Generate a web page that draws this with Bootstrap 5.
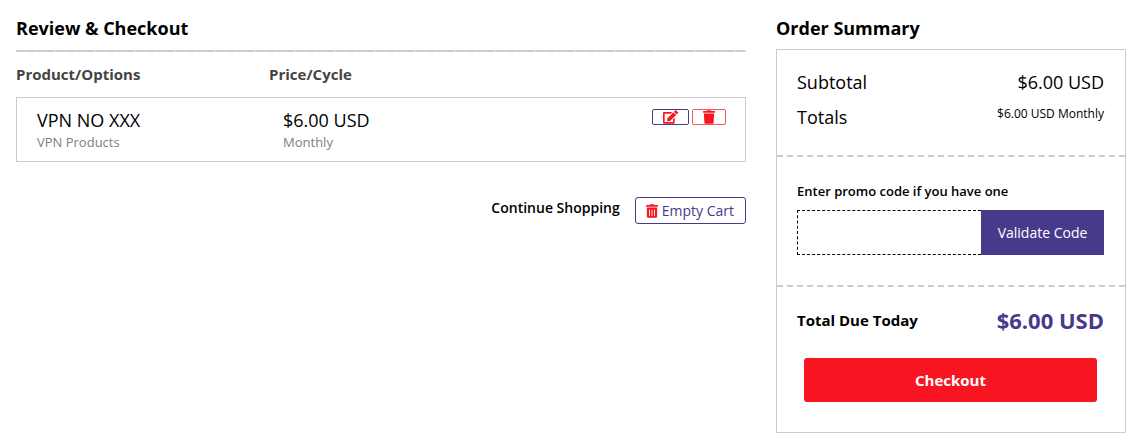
<!DOCTYPE html>
<html lang="en">
<head>
<meta charset="utf-8">
<meta name="viewport" content="width=device-width, initial-scale=1">
<title>Review &amp; Checkout</title>
<link href="https://cdn.jsdelivr.net/npm/bootstrap@5.3.0/dist/css/bootstrap.min.css" rel="stylesheet">
<style>
  body { font-family: "Open Sans", sans-serif; color: #000; font-size: 14px; line-height: 20px; }
  .page { padding: 16px 8px 4px 16px; gap: 30px; }
  .summary { width: 350px; }
  .title { font-size: 18px; line-height: 24px; font-weight: 700; margin: 0; }
  .rule { height: 2px; margin: 10px 0 12px; background: repeating-linear-gradient(90deg, #ccc 0 9px, #e4e4e4 9px 10px); }
  .items { border-collapse: separate; border-spacing: 0; table-layout: fixed; }
  .items th { font-size: 15px; line-height: 20px; font-weight: 700; color: #444; padding: 0 0 13px; }
  .items td { border: 0 solid #ccc; border-width: 1px 0; padding: 10px 14px 9px; vertical-align: top; }
  .items td:first-child { border-left-width: 1px; padding-left: 20px; }
  .items td:last-child { border-right-width: 1px; padding: 11px 19px 0 0; }
  .col-product { width: 34.66%; }
  .col-price { width: 35%; }
  .big { font-size: 18px; line-height: 24px; font-weight: 400; }
  .sub { font-size: 13px; color: #808080; }
  .row-tools { gap: 3px; }
  .icon-btn { height: 16px; padding: 0 10px; background: #fff; border: 1px solid #483a8a; border-radius: 2px; }
  .icon-btn.remove { border-color: #f4565c; }
  svg { fill: #f81421; display: block; flex: none; }
  .actions { margin-top: 35px; gap: 15px; }
  .actions a { color: #000; font-weight: 600; line-height: 22px; }
  .empty-btn { height: 27px; padding: 0 11px 0 10px; gap: 4px; background: #fff; border: 1px solid #483a8a; border-radius: 3px; color: #483a8a; font-weight: 400; }
  .panel { border: 1px solid #ccc; margin-top: 9px; }
  .section { padding: 20px 21px 20px 20px; border-bottom: 2px dashed #ccc; }
  .section:last-child { border-bottom: 0; padding-top: 19px; padding-bottom: 30px; }
  .totals { padding-bottom: 26px; }
  .totals > div + div { margin-top: 11px; }
  .small-price { font-size: 12px; line-height: 18px; font-weight: 400; }
  .promo { padding-top: 24px; padding-bottom: 30px; }
  .promo label { font-size: 13px; font-weight: 600; margin-bottom: 9px; }
  .promo input { height: 45px; border: 1px dashed #000; border-right: 0; padding: 0 12px; min-width: 0; border-radius: 0; }
  .promo button { width: 123px; flex: none; border: 0; background: #483a8a; color: #fff; }
  .due-label { font-size: 15px; font-weight: 700; }
  .due { font-size: 22px; line-height: 28px; font-weight: 700; color: #483a8a; }
  .checkout-btn { height: 44px; border: 0; border-radius: 3px; background: #f81421; color: #fff; font-size: 15px; font-weight: 700; margin: 24px 7px 0; }
</style>
</head>
<body>
<main class="page d-flex align-items-start">
  <section class="flex-grow-1">
    <h1 class="title">Review &amp; Checkout</h1>
    <div class="rule"></div>
    <table class="items w-100">
      <thead>
        <tr><th class="col-product" scope="col">Product/Options</th><th class="col-price" scope="col">Price/Cycle</th><th></th></tr>
      </thead>
      <tbody>
        <tr>
          <td><div class="big">VPN NO XXX</div><div class="sub">VPN Products</div></td>
          <td><div class="big">$6.00 USD</div><div class="sub">Monthly</div></td>
          <td>
            <div class="row-tools d-flex justify-content-end">
              <button type="button" class="icon-btn d-flex align-items-center" aria-label="Edit">
                <svg width="15" height="14" viewBox="0 0 576 512"><path d="M402.6 83.2l90.2 90.2c3.8 3.8 3.8 10 0 13.8L274.4 405.6l-92.8 10.3c-12.4 1.4-22.9-9.1-21.5-21.5l10.3-92.8L388.8 83.2c3.8-3.8 10-3.8 13.8 0zm162-22.9l-48.8-48.8c-15.2-15.2-39.9-15.2-55.2 0l-35.4 35.4c-3.8 3.8-3.8 10 0 13.8l90.2 90.2c3.8 3.8 10 3.8 13.8 0l35.4-35.4c15.2-15.3 15.2-40 0-55.2zM384 346.2V448H64V128h229.8c3.2 0 6.2-1.3 8.5-3.5l40-40c7.6-7.6 2.2-20.5-8.5-20.5H48C21.5 64 0 85.5 0 112v352c0 26.5 21.5 48 48 48h352c26.5 0 48-21.5 48-48V306.2c0-10.7-12.9-16-20.5-8.5l-40 40c-2.2 2.3-3.5 5.3-3.5 8.5z"/></svg>
              </button>
              <button type="button" class="icon-btn remove d-flex align-items-center" aria-label="Remove">
                <svg width="12" height="14" viewBox="0 0 448 512"><path d="M432 32H312l-9.4-18.7A24 24 0 0 0 281.1 0H166.8a23.72 23.72 0 0 0-21.4 13.3L136 32H16A16 16 0 0 0 0 48v32a16 16 0 0 0 16 16h416a16 16 0 0 0 16-16V48a16 16 0 0 0-16-16zM53.2 467a48 48 0 0 0 47.9 45h245.8a48 48 0 0 0 47.9-45L416 128H32z"/></svg>
              </button>
            </div>
          </td>
        </tr>
      </tbody>
    </table>
    <div class="actions d-flex justify-content-end">
      <a href="#" class="text-decoration-none">Continue Shopping</a>
      <button type="button" class="empty-btn d-flex align-items-center">
        <svg width="12" height="14" viewBox="0 0 448 512"><path fill-rule="evenodd" d="M432 32H312l-9.4-18.7A24 24 0 0 0 281.1 0H166.8a23.72 23.72 0 0 0-21.4 13.3L136 32H16A16 16 0 0 0 0 48v32a16 16 0 0 0 16 16h416a16 16 0 0 0 16-16V48a16 16 0 0 0-16-16zM32 464a48 48 0 0 0 48 48h288a48 48 0 0 0 48-48V128H32zM304 208a16 16 0 0 1 32 0v224a16 16 0 0 1-32 0zM208 208a16 16 0 0 1 32 0v224a16 16 0 0 1-32 0zM112 208a16 16 0 0 1 32 0v224a16 16 0 0 1-32 0z"/></svg>
        Empty Cart
      </button>
    </div>
  </section>

  <aside class="summary flex-shrink-0">
    <h2 class="title">Order Summary</h2>
    <div class="panel">
      <div class="section totals">
        <div class="d-flex justify-content-between big"><span>Subtotal</span><span>$6.00 USD</span></div>
        <div class="d-flex justify-content-between big"><span>Totals</span><span class="small-price">$6.00 USD Monthly</span></div>
      </div>
      <form class="section promo">
        <label for="promo" class="d-block">Enter promo code if you have one</label>
        <div class="d-flex">
          <input id="promo" type="text" class="flex-grow-1">
          <button type="submit">Validate Code</button>
        </div>
      </form>
      <div class="section d-flex flex-column">
        <div class="d-flex justify-content-between align-items-center"><strong class="due-label">Total Due Today</strong><span class="due">$6.00 USD</span></div>
        <button type="button" class="checkout-btn">Checkout</button>
      </div>
    </div>
  </aside>
</main>
<script src="https://cdn.jsdelivr.net/npm/bootstrap@5.3.0/dist/js/bootstrap.bundle.min.js"></script>
</body>
</html>
